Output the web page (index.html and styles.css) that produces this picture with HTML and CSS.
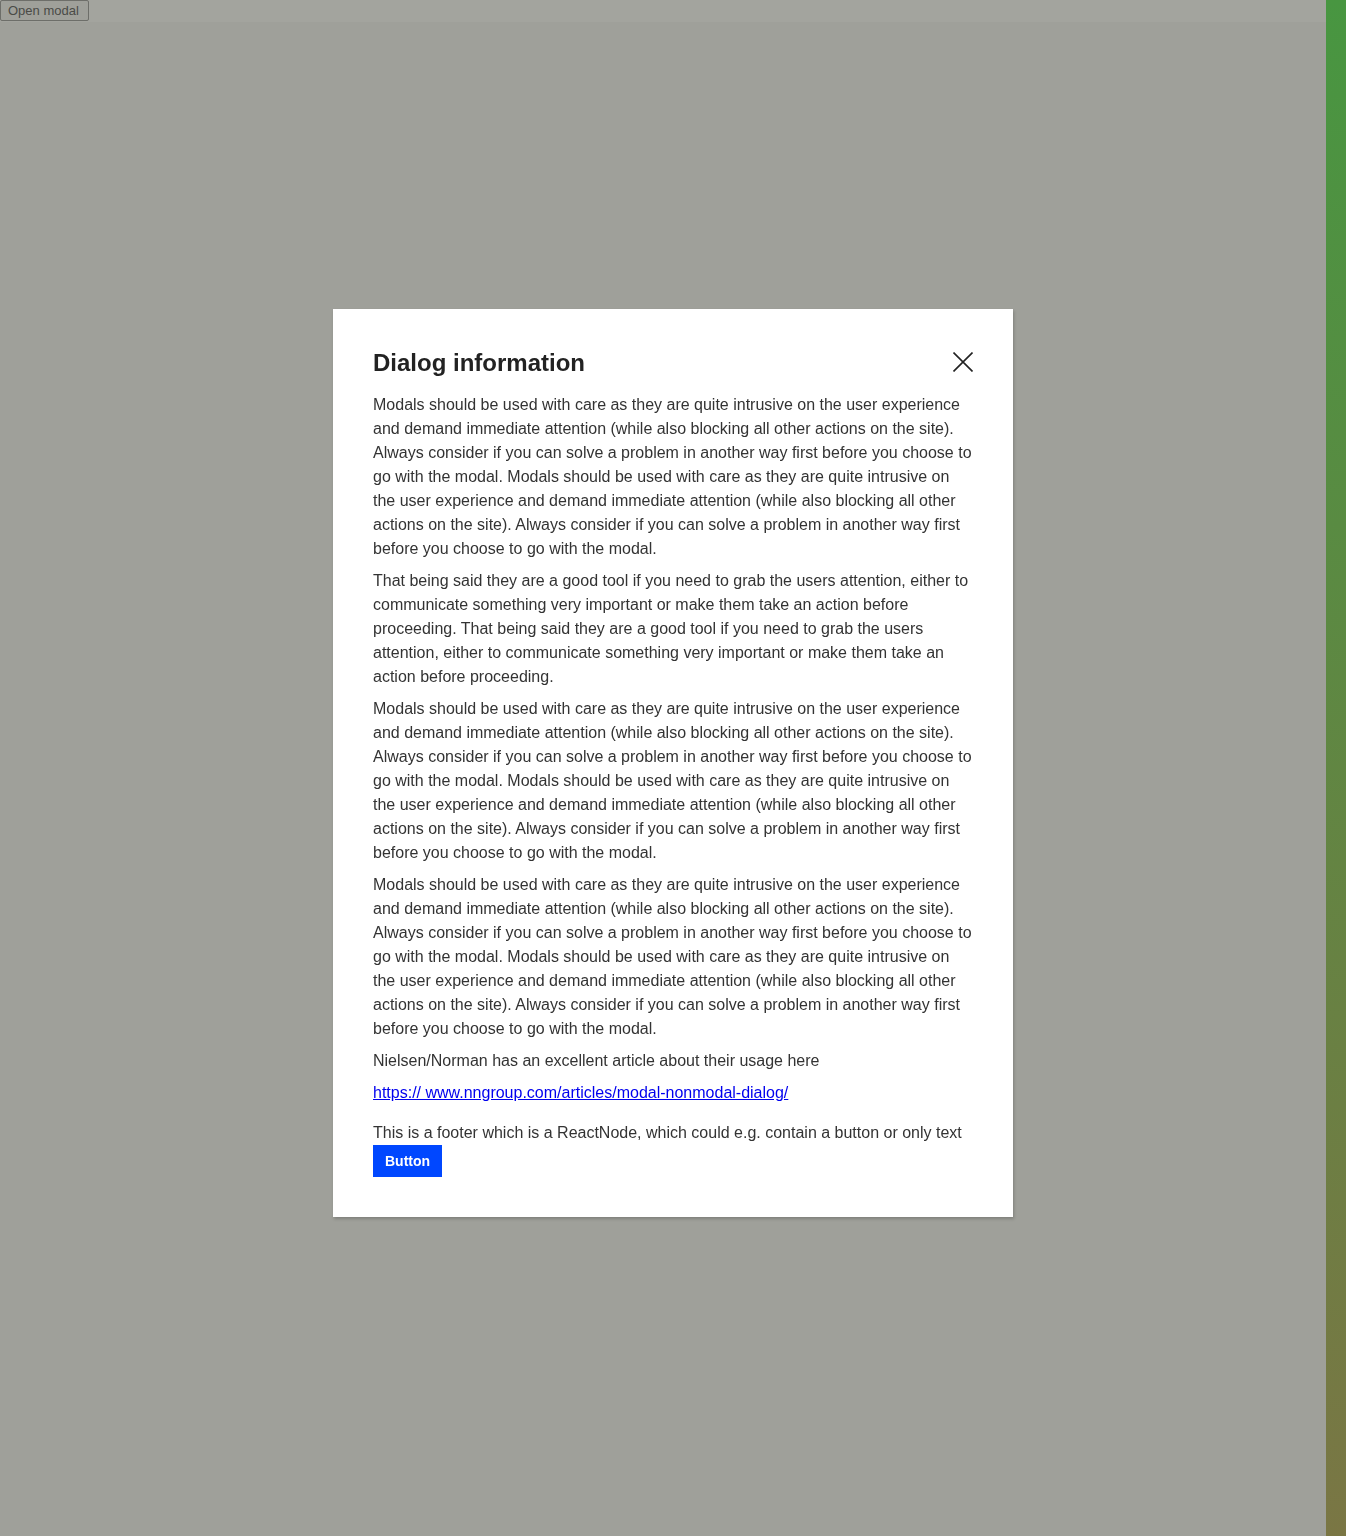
FILE: index.html
```html
<!DOCTYPE html>
<html lang="en">
<head>
<meta charset="utf-8">
<title>Modal</title>
<link rel="stylesheet" href="styles.css">
</head>
<body>
<div class="page">
  <div class="topbar"><button class="open-btn" type="button">Open modal</button></div>
</div>
<div class="side-strip"></div>
<div class="overlay"></div>
<div class="modal-layer">
  <div class="modal" role="dialog" aria-labelledby="dlg-title">
    <div class="modal-head">
      <h2 class="modal-title" id="dlg-title">Dialog information</h2>
      <button class="close-btn" type="button" aria-label="Close">
        <svg width="20" height="20" viewBox="0 0 20 20"><path d="M0.5 0.5 L19.5 19.5 M19.5 0.5 L0.5 19.5" stroke="#222" stroke-width="1.6" fill="none"/></svg>
      </button>
    </div>
    <div class="modal-body">
      <p>Modals should be used with care as they are quite intrusive on the user experience and demand immediate attention (while also blocking all other actions on the site). Always consider if you can solve a problem in another way first before you choose to go with the modal. Modals should be used with care as they are quite intrusive on the user experience and demand immediate attention (while also blocking all other actions on the site). Always consider if you can solve a problem in another way first before you choose to go with the modal.</p>
      <p>That being said they are a good tool if you need to grab the users attention, either to communicate something very important or make them take an action before proceeding. That being said they are a good tool if you need to grab the users attention, either to communicate something very important or make them take an action before proceeding.</p>
      <p>Modals should be used with care as they are quite intrusive on the user experience and demand immediate attention (while also blocking all other actions on the site). Always consider if you can solve a problem in another way first before you choose to go with the modal. Modals should be used with care as they are quite intrusive on the user experience and demand immediate attention (while also blocking all other actions on the site). Always consider if you can solve a problem in another way first before you choose to go with the modal.</p>
      <p>Modals should be used with care as they are quite intrusive on the user experience and demand immediate attention (while also blocking all other actions on the site). Always consider if you can solve a problem in another way first before you choose to go with the modal. Modals should be used with care as they are quite intrusive on the user experience and demand immediate attention (while also blocking all other actions on the site). Always consider if you can solve a problem in another way first before you choose to go with the modal.</p>
      <p>Nielsen/Norman has an excellent article about their usage here</p>
      <p><a href="#">https:// www.nngroup.com/articles/modal-nonmodal-dialog/</a></p>
    </div>
    <div class="modal-foot">
      <p>This is a footer which is a ReactNode, which could e.g. contain a button or only text</p>
      <button class="primary-btn" type="button">Button</button>
    </div>
  </div>
</div>
</body>
</html>
```
FILE: styles.css
```css
html, body {
  margin: 0;
  padding: 0;
  height: 100%;
}
body {
  font-family: "Liberation Sans", Arial, sans-serif;
  background: #9fa09a;
  overflow: hidden;
}
.page {
  margin-right: 20px;
  min-height: 100%;
}
.topbar {
  height: 22px;
  background: #a3a49e;
}
.open-btn {
  display: block;
  margin: 0;
  height: 21px;
  width: 89px;
  padding: 0 6px 0 7px;
  font-family: "Liberation Sans", Arial, sans-serif;
  font-size: 13px;
  text-align: left;
  color: #4a4b47;
  background: #9fa09a;
  border: 1px solid #6d6e69;
  border-radius: 2px;
}
.side-strip {
  position: fixed;
  top: 0;
  right: 0;
  bottom: 0;
  width: 20px;
  background: linear-gradient(to bottom, #489641, #7a7644);
}
.overlay {
  position: fixed;
  top: 22px;
  left: 0;
  right: 20px;
  bottom: 0;
  background: #9fa09a;
}
.modal-layer {
  position: fixed;
  inset: 0;
  display: flex;
  justify-content: center;
  align-items: flex-start;
  padding-top: 309px;
}
.modal {
  width: 600px;
  padding: 40px;
  background: #fff;
  box-shadow: 1px 2px 3px rgba(0, 0, 0, 0.2);
  color: #333;
}
.modal-head {
  display: flex;
  justify-content: space-between;
  align-items: flex-start;
  margin-bottom: 16px;
}
.modal-title {
  margin: 0;
  font-size: 24px;
  line-height: 28px;
  font-weight: 700;
  color: #222;
}
.close-btn {
  display: flex;
  margin-top: 3px;
  padding: 0;
  border: 0;
  background: none;
  width: 20px;
  height: 20px;
}
.modal-body p,
.modal-foot p {
  margin: 0 0 8px;
  font-size: 16px;
  line-height: 24px;
}
.modal-body p:last-child {
  margin-bottom: 0;
}
.modal-body a {
  color: #0000ee;
}
.modal-foot {
  margin-top: 16px;
}
.modal-foot p {
  margin: 0;
}
.primary-btn {
  display: block;
  height: 32px;
  padding: 0 12px;
  border: 0;
  background: #0047ff;
  color: #fff;
  font-family: "Liberation Sans", Arial, sans-serif;
  font-size: 14px;
  font-weight: 700;
}
```
